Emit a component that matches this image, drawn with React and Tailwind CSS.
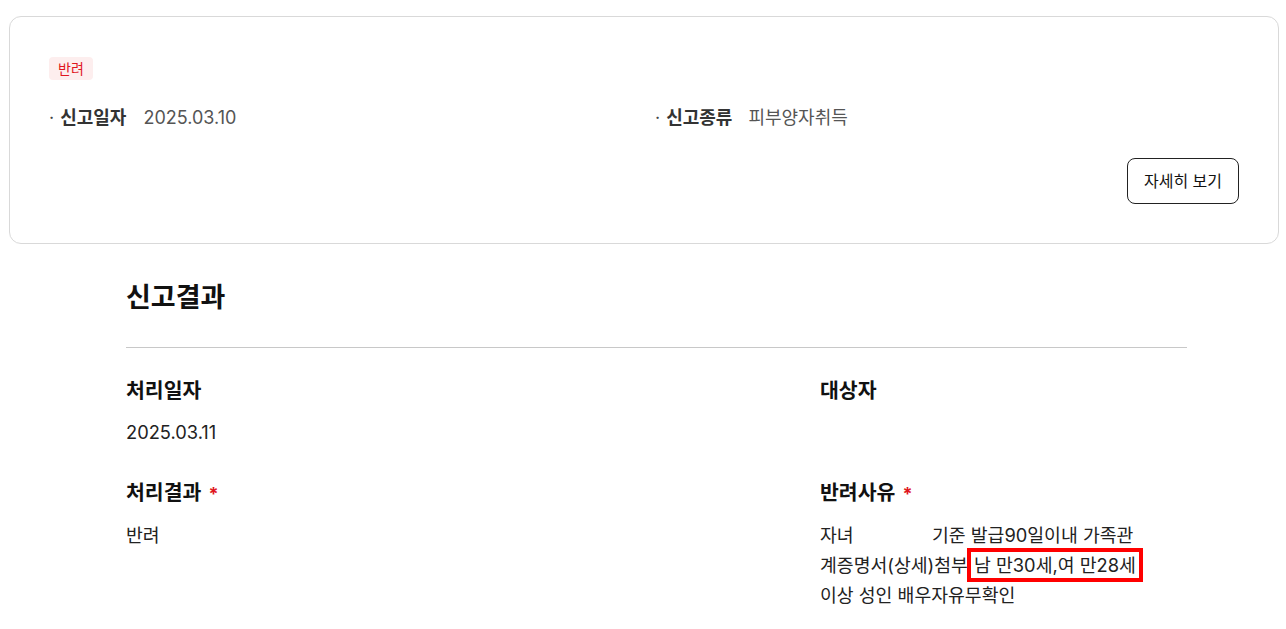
import React from "react";

const font = { fontFamily: 'Inter, "Noto Sans CJK KR", sans-serif' };

const Field = ({ label, required, children }) => (
  <div>
    <h3 className="text-[20.5px] font-bold leading-[28px] text-[#111]">
      {label}
      {required && <span className="ml-[7px] text-[18px] text-[#e0161e]">*</span>}
    </h3>
    <div className="mt-[12px] min-h-[30px] text-[18.3px] leading-[30px] text-[#222]">{children}</div>
  </div>
);

export default function App() {
  return (
    <div className="min-h-screen bg-white pl-[9px] pr-[7px] pt-4" style={font}>
      {/* Summary card */}
      <div className="rounded-xl border border-[#d9d9d9] px-[39px] pt-[39px] pb-[39px]">
        <span className="inline-block rounded bg-[#fdeeee] px-[9px] py-[2px] text-[14px] leading-[19px] text-[#e0161e]">
          반려
        </span>
        <div className="mt-[25px] flex text-[18px] leading-[26px]">
          <div className="flex w-[606px] items-center">
            <span className="mr-[6px] text-[#444]">·</span>
            <span className="font-bold text-[#333]">신고일자</span>
            <span className="ml-[17px] text-[#555]">2025.03.10</span>
          </div>
          <div className="flex items-center">
            <span className="mr-[6px] text-[#444]">·</span>
            <span className="font-bold text-[#333]">신고종류</span>
            <span className="ml-[16px] text-[#555]">피부양자취득</span>
          </div>
        </div>
        <div className="mt-[27px] flex justify-end">
          <button className="h-[46px] w-[112px] rounded-lg border border-[#222] text-[16px] text-[#111]">
            자세히 보기
          </button>
        </div>
      </div>

      {/* Result section */}
      <div className="ml-[117px] mt-[36px] w-[1061px]">
        <h2 className="text-[27px] font-bold leading-9 text-[#111]">신고결과</h2>
        <hr className="mt-[31px] border-t border-[#c8c8c8]" />
        <div className="mt-[29px] grid grid-cols-[694px_1fr] gap-y-[32px]">
          <Field label="처리일자">2025.03.11</Field>
          <Field label="대상자" />
          <Field label="처리결과" required>
            반려
          </Field>
          <Field label="반려사유" required>
            <div>
              <span className="inline-block w-[112px]">자녀</span>
              기준 발급90일이내 가족관
            </div>
            <div>
              계증명서(상세)첨부{" "}
              <span className="px-[1px] outline-[4px] outline-offset-[2px] outline-[#ff0000] outline">
                남 만30세,여 만28세
              </span>
            </div>
            <div>이상 성인 배우자유무확인</div>
          </Field>
        </div>
      </div>
    </div>
  );
}
